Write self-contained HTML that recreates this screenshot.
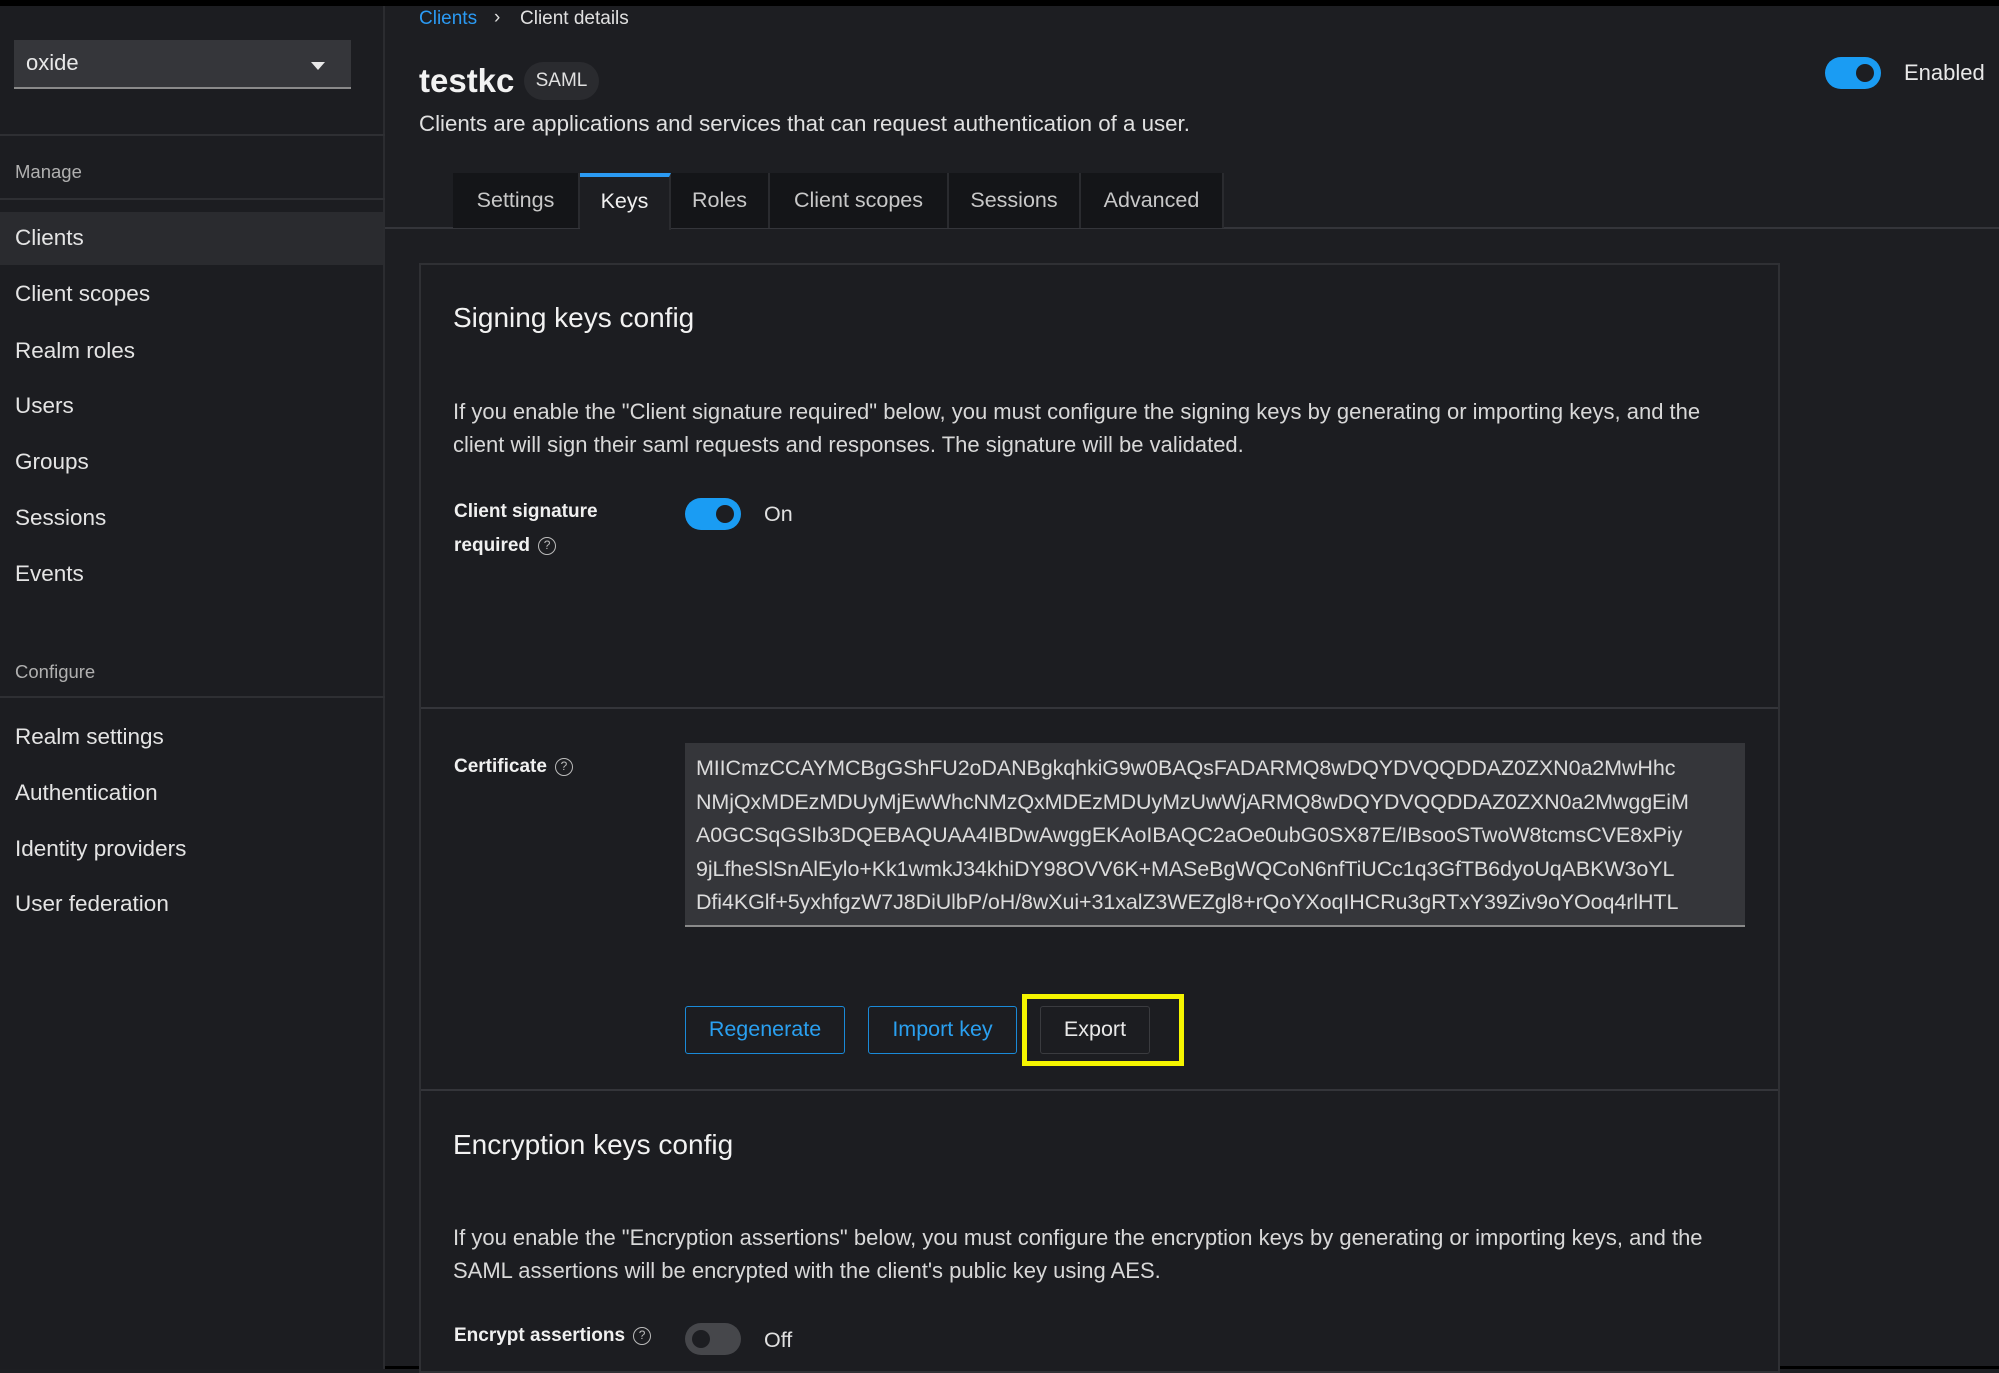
<!DOCTYPE html>
<html><head><meta charset="utf-8"><style>
*{margin:0;padding:0;box-sizing:border-box}
body{width:1999px;height:1369px;background:#1d1e22;font-family:"Liberation Sans",sans-serif;color:#e0e0e0;position:relative;overflow:hidden}
.a{position:absolute;white-space:nowrap}
.side{position:absolute;left:0;top:6px;width:385px;height:1363px;background:#1c1d21;border-right:2px solid #2b2c30}
.hr{position:absolute;left:0;width:385px;height:2px;background:#2e2f33}
.nav{position:absolute;left:15px;font-size:22.5px;color:#e4e4e4}
.sec{position:absolute;left:15px;font-size:18.5px;color:#b0b0b0}
.tog{position:absolute;width:56px;height:32px;border-radius:16px;background:#1a9cf3}
.tog::after{content:"";position:absolute;right:7px;top:7px;width:18px;height:18px;border-radius:50%;background:#1d1e22}
.toff{background:#46474b}
.toff::after{left:7px;right:auto;background:#1d1e22}
.tab{position:absolute;top:173px;height:55px;background:#141518;font-size:21.5px;color:#c8c8c8;text-align:center;line-height:55px;border-right:2px solid #2a2b2f}
.p{font-size:22px;color:#d8d8d8;line-height:33px}
.lbl{font-size:19px;font-weight:bold;color:#f0f0f0}
.q{display:inline-block;width:18px;height:18px;border:1.6px solid #bbb;border-radius:50%;font-size:12px;text-align:center;line-height:15px;color:#bbb;font-weight:normal;vertical-align:middle;margin-left:8px}
.btn{position:absolute;top:1006px;height:48px;border:1.5px solid #1a8ad8;border-radius:3px;color:#2aa0f0;font-size:21.5px;text-align:center;line-height:45px}
</style></head><body>
<div class="a" style="left:0;top:0;width:1999px;height:6px;background:#000"></div>
<div class="a" style="left:0;top:1366px;width:1999px;height:3px;background:#000"></div>
<div class="side">
 <div class="a" style="left:14px;top:34px;width:337px;height:49px;background:#35363a;border-bottom:2px solid #8a8a8a"></div>
 <div class="a" style="left:26px;top:44px;font-size:22px;color:#e8e8e8">oxide</div>
 <div class="a" style="left:311px;top:56px;width:0;height:0;border-left:7px solid transparent;border-right:7px solid transparent;border-top:8px solid #e8e8e8"></div>
 <div class="hr" style="top:128px"></div>
 <div class="sec" style="top:155px">Manage</div>
 <div class="hr" style="top:192px"></div>
 <div class="a" style="left:0;top:206px;width:383px;height:53px;background:#2a2b2f"></div>
 <div class="nav" style="top:219px">Clients</div>
 <div class="nav" style="top:275px">Client scopes</div>
 <div class="nav" style="top:332px">Realm roles</div>
 <div class="nav" style="top:387px">Users</div>
 <div class="nav" style="top:443px">Groups</div>
 <div class="nav" style="top:499px">Sessions</div>
 <div class="nav" style="top:555px">Events</div>
 <div class="sec" style="top:655px">Configure</div>
 <div class="hr" style="top:690px"></div>
 <div class="nav" style="top:718px">Realm settings</div>
 <div class="nav" style="top:774px">Authentication</div>
 <div class="nav" style="top:830px">Identity providers</div>
 <div class="nav" style="top:885px">User federation</div>
</div>

<div class="a" style="left:419px;top:8px;font-size:19px;color:#2b9af3">Clients</div>
<div class="a" style="left:494px;top:7px;font-size:19px;color:#ddd">›</div>
<div class="a" style="left:520px;top:8px;font-size:19px;color:#e0e0e0">Client details</div>
<div class="a" style="left:419px;top:62px;font-size:33px;font-weight:bold;color:#f2f2f2">testkc</div>
<div class="a" style="left:524px;top:62px;width:75px;height:38px;border-radius:19px;background:#2a2b2f;font-size:19px;text-align:center;line-height:38px;color:#e0e0e0">SAML</div>
<div class="a" style="left:419px;top:111px;font-size:22.3px;color:#e0e0e0">Clients are applications and services that can request authentication of a user.</div>
<div class="tog" style="left:1825px;top:57px"></div>
<div class="a" style="left:1904px;top:60px;font-size:22px;color:#e8e8e8">Enabled</div>

<div class="a" style="left:385px;top:227px;width:1614px;height:2px;background:#34353a"></div>
<div class="tab" style="left:453px;width:127px">Settings</div>
<div class="tab" style="left:580px;width:91px;background:#1d1e22;color:#f0f0f0;border-top:4px solid #2b9af3;line-height:49px;height:57px">Keys</div>
<div class="tab" style="left:671px;width:99px">Roles</div>
<div class="tab" style="left:770px;width:179px">Client scopes</div>
<div class="tab" style="left:949px;width:132px">Sessions</div>
<div class="tab" style="left:1081px;width:143px">Advanced</div>

<div class="a" style="left:419px;top:263px;width:1361px;height:1110px;border:2px solid #2f3034;background:#1c1d21"></div>
<div class="a" style="left:421px;top:707px;width:1357px;height:2px;background:#34353a"></div>
<div class="a" style="left:421px;top:1089px;width:1357px;height:2px;background:#34353a"></div>

<div class="a" style="left:453px;top:302px;font-size:28px;color:#f2f2f2">Signing keys config</div>
<div class="a p" style="left:453px;top:395px">If you enable the "Client signature required" below, you must configure the signing keys by generating or importing keys, and the<br>client will sign their saml requests and responses. The signature will be validated.</div>
<div class="a lbl" style="left:454px;top:495px;line-height:34px">Client signature<br>required<span class="q">?</span></div>
<div class="tog" style="left:685px;top:498px"></div>
<div class="a" style="left:764px;top:502px;font-size:21.5px">On</div>

<div class="a lbl" style="left:454px;top:756px">Certificate<span class="q">?</span></div>
<div class="a" style="left:685px;top:743px;width:1060px;height:184px;background:#35363a;border-bottom:2px solid #8a8a8a;overflow:hidden;padding:9px 0 0 11px;font-size:21.5px;line-height:33.5px;color:#dcdcdc;letter-spacing:-0.1px">MIICmzCCAYMCBgGShFU2oDANBgkqhkiG9w0BAQsFADARMQ8wDQYDVQQDDAZ0ZXN0a2MwHhc<br>NMjQxMDEzMDUyMjEwWhcNMzQxMDEzMDUyMzUwWjARMQ8wDQYDVQQDDAZ0ZXN0a2MwggEiM<br>A0GCSqGSIb3DQEBAQUAA4IBDwAwggEKAoIBAQC2aOe0ubG0SX87E/IBsooSTwoW8tcmsCVE8xPiy<br>9jLfheSlSnAlEylo+Kk1wmkJ34khiDY98OVV6K+MASeBgWQCoN6nfTiUCc1q3GfTB6dyoUqABKW3oYL<br>Dfi4KGlf+5yxhfgzW7J8DiUlbP/oH/8wXui+31xalZ3WEZgl8+rQoYXoqIHCRu3gRTxY39Ziv9oYOoq4rlHTL</div>

<div class="btn" style="left:685px;width:160px">Regenerate</div>
<div class="btn" style="left:868px;width:149px">Import key</div>
<div class="a" style="left:1022px;top:994px;width:162px;height:72px;border:5px solid #f5f500"></div>
<div class="btn" style="left:1040px;width:110px;border-color:#3a3b3f;color:#e8e8e8">Export</div>

<div class="a" style="left:453px;top:1129px;font-size:28px;color:#f2f2f2">Encryption keys config</div>
<div class="a p" style="left:453px;top:1221px">If you enable the "Encryption assertions" below, you must configure the encryption keys by generating or importing keys, and the<br>SAML assertions will be encrypted with the client's public key using AES.</div>
<div class="a lbl" style="left:454px;top:1325px">Encrypt assertions<span class="q">?</span></div>
<div class="tog toff" style="left:685px;top:1323px"></div>
<div class="a" style="left:764px;top:1328px;font-size:21.5px">Off</div>
</body></html>
